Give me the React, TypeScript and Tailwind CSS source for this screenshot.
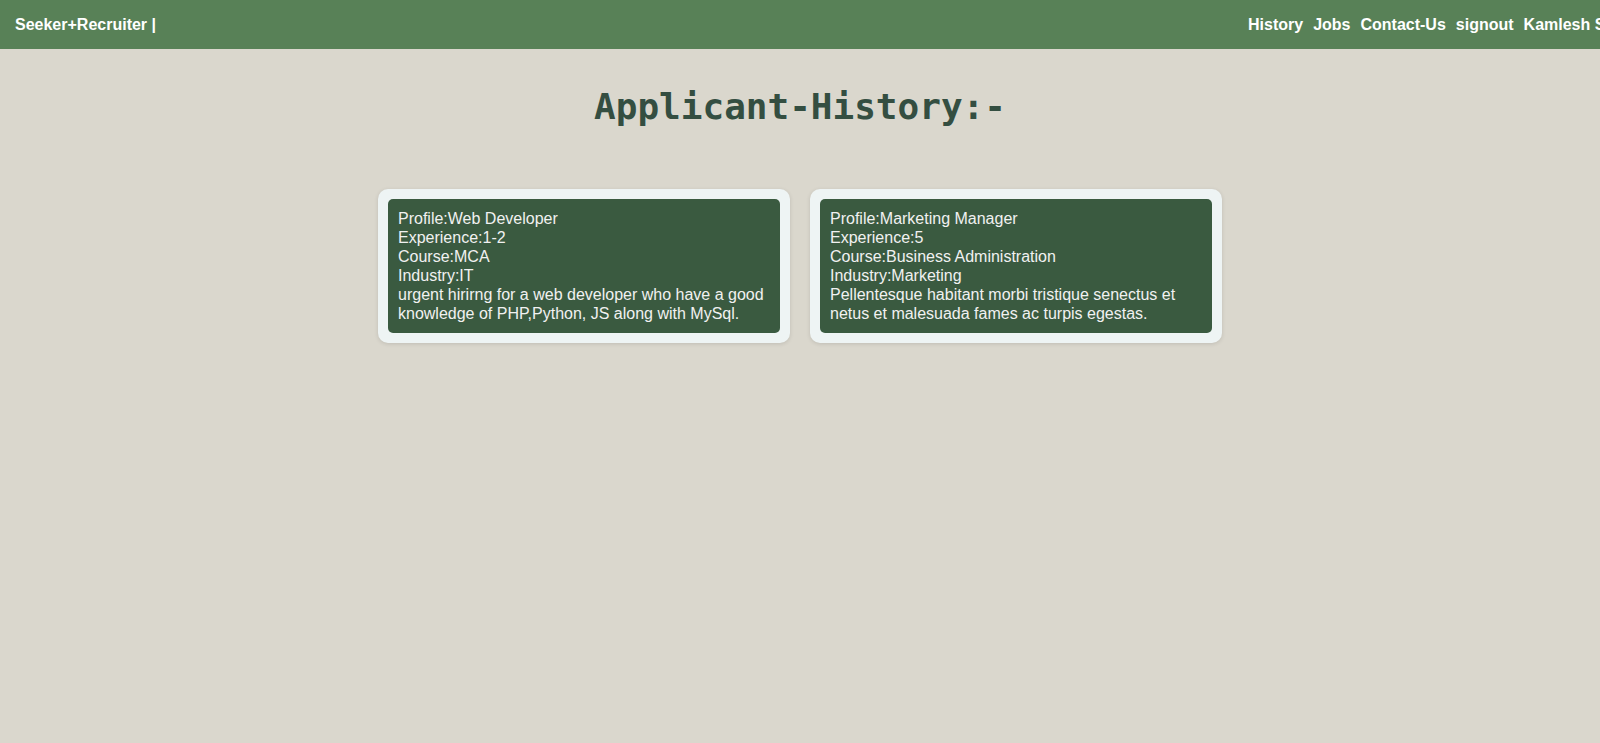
import React from 'react';

interface Job {
  profile: string;
  experience: string;
  course: string;
  industry: string;
  description: string;
}

const jobs: Job[] = [
  {
    profile: 'Web Developer',
    experience: '1-2',
    course: 'MCA',
    industry: 'IT',
    description:
      'urgent hirirng for a web developer who have a good knowledge of PHP,Python, JS along with MySql.',
  },
  {
    profile: 'Marketing Manager',
    experience: '5',
    course: 'Business Administration',
    industry: 'Marketing',
    description:
      'Pellentesque habitant morbi tristique senectus et netus et malesuada fames ac turpis egestas.',
  },
];

const navLinks = ['History', 'Jobs', 'Contact-Us', 'signout', 'Kamlesh Sharma'];

const JobCard: React.FC<{ job: Job }> = ({ job }) => (
  <div className="w-[412px] rounded-[10px] bg-[#eef4f4] p-[10px] shadow-[0_1px_4px_rgba(0,0,0,0.12)]">
    <div className="rounded-[5px] bg-[#3a5a40] p-[10px] text-[16px] leading-[19px] text-[#f1f1f1]">
      <div>Profile:{job.profile}</div>
      <div>Experience:{job.experience}</div>
      <div>Course:{job.course}</div>
      <div>Industry:{job.industry}</div>
      <div>{job.description}</div>
    </div>
  </div>
);

const App: React.FC = () => {
  return (
    <div className="min-h-[743px] overflow-hidden bg-[#dad7cd] font-['Liberation_Sans',Arial,sans-serif]">
      <nav className="flex h-[49px] items-center justify-between overflow-hidden bg-[#588157] px-[15px] text-[16px] font-bold text-white">
        <div className="whitespace-nowrap">Seeker+Recruiter |</div>
        <div className="flex w-[337px] shrink-0 gap-[10px] whitespace-nowrap">
          {navLinks.map((link) => (
            <a key={link} className="shrink-0 cursor-pointer">
              {link}
            </a>
          ))}
        </div>
      </nav>

      <h1 className="mt-[37px] text-center font-['DejaVu_Sans_Mono',monospace] text-[36px] font-bold leading-[42px] text-[#344e41]">
        Applicant-History:-
      </h1>

      <div className="mt-[61px] flex justify-center gap-[20px]">
        {jobs.map((job) => (
          <JobCard key={job.profile} job={job} />
        ))}
      </div>
    </div>
  );
};

export default App;
